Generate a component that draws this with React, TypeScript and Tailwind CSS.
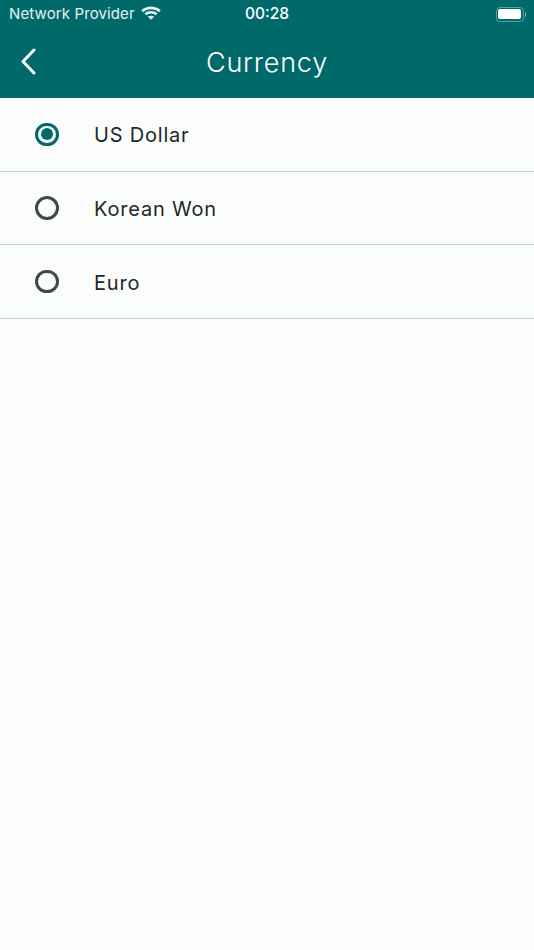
const currencies = [
  { name: "US Dollar", selected: true },
  { name: "Korean Won", selected: false },
  { name: "Euro", selected: false },
];

function Wifi() {
  return (
    <svg width="20" height="14" viewBox="0 0 20 14" fill="none" stroke="currentColor" strokeWidth="2.600" className="ml-[6px] mb-[3px]">
      <path d="M1.200 5.200C6 0.700 14 0.700 18.800 5.200" />
      <path d="M4.300 8.300C7.500 5.500 12.500 5.500 15.700 8.300" />
      <path d="M10 13.800L6.800 10.700C8.600 9.300 11.400 9.300 13.200 10.700Z" fill="currentColor" stroke="none" />
    </svg>
  );
}

function Battery() {
  return (
    <div className="flex items-center">
      <div className="h-[15px] w-[28px] rounded-[4px] border-[1.5px] border-white/35 p-[1.5px]">
        <div className="h-full w-full rounded-[2px] bg-white" />
      </div>
      <div className="ml-[1px] h-[5px] w-[1.5px] rounded-r-sm bg-white/50" />
    </div>
  );
}

function Radio({ selected }: { selected: boolean }) {
  if (selected) {
    return (
      <div className="flex h-[23.5px] w-[23.5px] items-center justify-center rounded-full border-[3px] border-[#00696a]">
        <div className="h-[12px] w-[12px] rounded-full bg-[#00696a]" />
      </div>
    );
  }
  return <div className="h-[23.5px] w-[23.5px] rounded-full border-[3px] border-[#3f4948]" />;
}

export default function App() {
  return (
    <div className="flex h-[950px] w-[534px] flex-col bg-[#fafdfc] font-['Roboto',sans-serif]">
      <div className="h-[98px] bg-[#00696a] text-white">
        <div className="relative flex h-[28px] items-center justify-between pl-[9px] pr-[8px] font-['Inter',sans-serif] text-[15px]">
          <div className="flex items-center tracking-[0.12px] text-white/90">
            Network Provider
            <Wifi />
          </div>
          <div className="absolute left-0 right-0 text-center text-[15.5px] font-medium">00:28</div>
          <Battery />
        </div>
        <div className="relative flex h-[70px] items-center justify-center">
          <svg width="18" height="28" viewBox="0 0 18 28" fill="none" stroke="currentColor" strokeWidth="3" strokeLinecap="round" strokeLinejoin="round" className="absolute left-[20px] top-[20px]">
            <path d="M14 2L3 13.500L14 25" />
          </svg>
          <div className="font-['Inter',sans-serif] text-[27px] font-light tracking-[0.75px]">Currency</div>
        </div>
      </div>
      {currencies.map((item) => (
        <div key={item.name} className="flex h-[73.67px] items-center border-b-[1.5px] border-[#c4d0ce] pl-[35px]">
          <Radio selected={item.selected} />
          <div className="ml-[35.500px] pt-[2px] font-['Inter',sans-serif] text-[20px] tracking-[0.8px] text-[#222827]">{item.name}</div>
        </div>
      ))}
    </div>
  );
}
